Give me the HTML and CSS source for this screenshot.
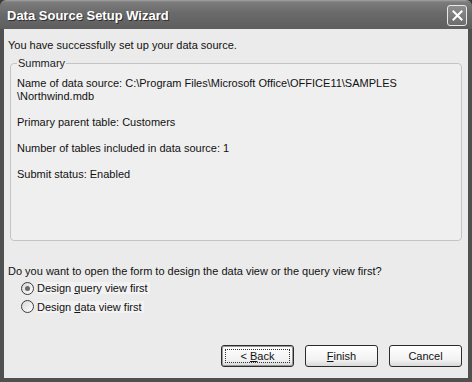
FILE: index.html
```html
<!DOCTYPE html>
<html lang="en">
<head>
    <meta charset="UTF-8">
    <title>Data Source Setup Wizard</title>
    <link rel="stylesheet" href="styles.css">
</head>
<body>
    <div class="window">
        <div class="titlebar">
            <span class="title">Data Source Setup Wizard</span>
            <button class="close" aria-label="Close">
                <svg width="11" height="11" viewBox="0 0 11 11">
                    <path d="M1.5 1.5 L9.5 9.5 M9.5 1.5 L1.5 9.5" stroke="#fff" stroke-width="2" stroke-linecap="square"/>
                </svg>
            </button>
        </div>
        <div class="content">
            <p class="intro">You have successfully set up your data source.</p>
            <fieldset class="summary">
                <legend>Summary</legend>
                <p>Name of data source: C:\Program Files\Microsoft Office\OFFICE11\SAMPLES<br>\Northwind.mdb</p>
                <p>Primary parent table: Customers</p>
                <p>Number of tables included in data source: 1</p>
                <p>Submit status: Enabled</p>
            </fieldset>
            <p class="question">Do you want to open the form to design the data view or the query view first?</p>
            <div class="options">
                <label class="option">
                    <span class="radio checked"></span>
                    <span class="option-text">Design <u>q</u>uery view first</span>
                </label>
                <label class="option">
                    <span class="radio"></span>
                    <span class="option-text">Design <u>d</u>ata view first</span>
                </label>
            </div>
            <div class="actions">
                <button class="btn default"><span class="focus">&lt; <u>B</u>ack</span></button>
                <button class="btn"><u>F</u>inish</button>
                <button class="btn">Cancel</button>
            </div>
        </div>
    </div>
</body>
</html>
```

FILE: styles.css
```css
body {
    margin: 0;
    padding: 0;
    background-color: #3a3a3a;
    font-family: "Liberation Sans", Arial, sans-serif;
    font-size: 11px;
    color: #111111;
}

.window {
    width: 472px;
    height: 382px;
    display: flex;
    flex-direction: column;
}

.titlebar {
    height: 29px;
    flex: none;
    display: flex;
    align-items: center;
    justify-content: space-between;
    padding: 0 5px 0 7px;
    box-sizing: border-box;
    background: linear-gradient(to bottom, #a4a4a4 0, #7c7c7c 2px, #6a6a6a 45%, #5e5e5e 100%);
    border-radius: 6px 6px 0 0;
}

.title {
    font-family: "Liberation Sans", Arial, sans-serif;
    font-weight: bold;
    font-size: 13px;
    color: #ffffff;
    text-shadow: 1px 1px 0 #2e2e2e;
    padding-top: 2px;
}

.close {
    width: 20px;
    height: 21px;
    margin-top: 2px;
    padding: 0;
    display: flex;
    align-items: center;
    justify-content: center;
    background: linear-gradient(to bottom, #8e8e8e, #6c6c6c);
    border: 1px solid #e8e8e8;
    border-radius: 3px;
}

.content {
    flex: 1;
    display: flex;
    flex-direction: column;
    background-color: #ebebeb;
    border: 4px solid #505050;
    border-top: 0;
    padding: 10px 6px 11px 4px;
}

.content p {
    margin: 0;
    line-height: 13px;
}

.summary {
    margin: 5px 0 0 2px;
    padding: 7px 6px 59px;
    border: 1px solid #c4c4c4;
    border-radius: 4px;
    background-color: #efefef;
}

.summary legend {
    padding: 0 1px;
    margin-left: 0;
    line-height: 13px;
    color: #222222;
}

.summary p + p {
    margin-top: 13px;
}

.content .question {
    margin-top: 24px;
}

.options {
    margin-top: 1px;
    padding-left: 13px;
}

.option {
    display: flex;
    align-items: center;
    height: 18.5px;
}

.radio {
    width: 11px;
    height: 11px;
    border: 1px solid #3c3c3c;
    border-radius: 50%;
    background: linear-gradient(135deg, #d8d8d8, #ffffff);
    display: flex;
    align-items: center;
    justify-content: center;
    margin-right: 3px;
}

.radio.checked::after {
    content: "";
    width: 5px;
    height: 5px;
    border-radius: 50%;
    background-color: #6a6a6a;
}

.option-text {
    background-color: #f2f2f2;
    padding-right: 2px;
}

.actions {
    margin-top: auto;
    display: flex;
    justify-content: flex-end;
    gap: 11px;
}

.btn {
    width: 73px;
    height: 22px;
    font-family: inherit;
    font-size: 11px;
    color: #111111;
    border: 1px solid #2c2c2c;
    border-radius: 3px;
    background: linear-gradient(to bottom, #ffffff 0, #f2f2f2 70%, #d8d8d8 100%);
    padding: 0;
}

.btn.default {
    box-shadow: inset 0 0 0 1px #9a9a9a;
    padding: 3px;
}

.focus {
    display: block;
    height: 100%;
    box-sizing: border-box;
    border: 1px dotted #333333;
    line-height: 12px;
}
```
